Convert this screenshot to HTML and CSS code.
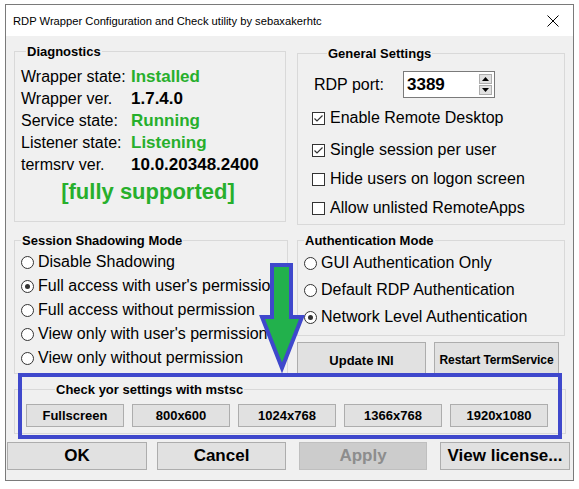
FILE: index.html
```html
<!DOCTYPE html>
<html>
<head>
<meta charset="utf-8">
<link rel="stylesheet" href="styles.css">
</head>
<body>
<div class="window">
  <div class="titlebar">
    <span class="title">RDP Wrapper Configuration and Check utility by sebaxakerhtc</span>
    <svg class="close" width="12" height="12" viewBox="0 0 12 12"><path d="M0.5 0.5 L11.5 11.5 M11.5 0.5 L0.5 11.5" stroke="#000" stroke-width="1" fill="none"/></svg>
  </div>

  <div class="row row1">
    <div class="group diag">
      <div class="legend lg-diag">Diagnostics</div>
      <div class="kvs">
        <div class="kv"><span class="k">Wrapper state:</span><span class="v green">Installed</span></div>
        <div class="kv"><span class="k">Wrapper ver.</span><span class="v">1.7.4.0</span></div>
        <div class="kv"><span class="k">Service state:</span><span class="v green">Running</span></div>
        <div class="kv"><span class="k">Listener state:</span><span class="v green">Listening</span></div>
        <div class="kv"><span class="k">termsrv ver.</span><span class="v">10.0.20348.2400</span></div>
      </div>
      <div class="supported">[fully supported]</div>
    </div>

    <div class="group general">
      <div class="legend lg-gen">General Settings</div>
      <div class="port">
        <span class="portlabel">RDP port:</span>
        <div class="portbox">
          <span class="portval">3389</span>
          <div class="spin">
            <div class="spinbtn"><svg width="7" height="4" viewBox="0 0 7 4"><path d="M0 4 L3.5 0 L7 4 Z" fill="#000"/></svg></div>
            <div class="spinbtn"><svg width="7" height="4" viewBox="0 0 7 4"><path d="M0 0 L3.5 4 L7 0 Z" fill="#000"/></svg></div>
          </div>
        </div>
      </div>
      <div class="checks">
        <div class="cb"><svg class="box" width="13" height="13" viewBox="0 0 13 13"><rect x="0.5" y="0.5" width="12" height="12" fill="#fff" stroke="#333"/><path d="M2.5 6.5 L5 9 L10.5 3.5" stroke="#333" stroke-width="1.2" fill="none"/></svg><span>Enable Remote Desktop</span></div>
        <div class="cb cb2"><svg class="box" width="13" height="13" viewBox="0 0 13 13"><rect x="0.5" y="0.5" width="12" height="12" fill="#fff" stroke="#333"/><path d="M2.5 6.5 L5 9 L10.5 3.5" stroke="#333" stroke-width="1.2" fill="none"/></svg><span>Single session per user</span></div>
        <div class="cb"><svg class="box" width="13" height="13" viewBox="0 0 13 13"><rect x="0.5" y="0.5" width="12" height="12" fill="#fff" stroke="#333"/></svg><span>Hide users on logon screen</span></div>
        <div class="cb"><svg class="box" width="13" height="13" viewBox="0 0 13 13"><rect x="0.5" y="0.5" width="12" height="12" fill="#fff" stroke="#333"/></svg><span>Allow unlisted RemoteApps</span></div>
      </div>
    </div>
  </div>

  <div class="row row2">
    <div class="group shadow">
      <div class="legend lg-sh">Session Shadowing Mode</div>
      <div class="radios sh-radios">
        <div class="rb"><span class="radio"></span><span class="rt">Disable Shadowing</span></div>
        <div class="rb"><span class="radio on"></span><span class="rt">Full access with user's permission</span></div>
        <div class="rb"><span class="radio"></span><span class="rt">Full access without permission</span></div>
        <div class="rb"><span class="radio"></span><span class="rt">View only with user's permission</span></div>
        <div class="rb"><span class="radio"></span><span class="rt">View only without permission</span></div>
      </div>
    </div>
    <div class="rightcol">
      <div class="group auth">
        <div class="legend lg-auth">Authentication Mode</div>
        <div class="radios au-radios">
          <div class="rb"><span class="radio"></span><span class="rt">GUI Authentication Only</span></div>
          <div class="rb"><span class="radio"></span><span class="rt">Default RDP Authentication</span></div>
          <div class="rb"><span class="radio on"></span><span class="rt">Network Level Authentication</span></div>
        </div>
      </div>
      <div class="actrow">
        <div class="btn act act1">Update INI</div>
        <div class="btn act act2">Restart TermService</div>
      </div>
    </div>
  </div>

  <div class="row group mstsc">
    <div class="legend lg-ms">Check yor settings with mstsc</div>
    <div class="msbtns">
      <div class="btn ms">Fullscreen</div>
      <div class="btn ms">800x600</div>
      <div class="btn ms">1024x768</div>
      <div class="btn ms">1366x768</div>
      <div class="btn ms">1920x1080</div>
    </div>
  </div>

  <div class="bottom">
    <div class="btn big b-ok">OK</div>
    <div class="btn big b-cancel">Cancel</div>
    <div class="btn big b-apply disabled">Apply</div>
    <div class="btn big b-lic">View license...</div>
  </div>

  <div class="highlight"></div>
  <svg class="arrow" width="579" height="489" viewBox="0 0 579 489">
    <polygon points="272,265 291,265 291,317 302,317 282,368 262,317 272,317" fill="#22b14c" stroke="#3f48cc" stroke-width="4" stroke-linejoin="miter" stroke-miterlimit="10"/>
  </svg>
</div>
</body>
</html>
```

FILE: styles.css
```css
html, body {
  margin: 0;
  padding: 0;
  background: #ffffff;
}

body {
  font-family: "Liberation Sans", Arial, sans-serif;
  color: #000;
}

.window {
  position: relative;
  margin: 4px 0 0 5px;
  width: 569px;
  height: 477px;
  box-sizing: border-box;
  border: 1px solid #7a7a7a;
  background: #f0f0f0;
}

.titlebar {
  height: 31px;
  background: #fff;
  display: flex;
  align-items: center;
  padding-left: 7px;
  padding-right: 14px;
}

.title {
  font-size: 11.2px;
  color: #000;
}

.close {
  margin-left: auto;
  display: block;
}

.row {
  margin-left: 8px;
}

.row1 {
  display: flex;
  align-items: flex-start;
  gap: 11px;
  margin-top: 15px;
}

.group {
  box-sizing: border-box;
  border: 1px solid #d9d9d9;
}

.legend {
  width: fit-content;
  margin-top: -8px;
  height: 15px;
  line-height: 15px;
  padding: 0 1px;
  background: #f0f0f0;
  font-weight: bold;
  font-size: 13px;
}

.lg-diag { margin-left: 11px; }
.lg-gen { margin-left: 29px; }
.lg-sh { margin-left: 6px; }
.lg-auth { margin-left: 6px; }
.lg-ms { margin-left: 40px; }

/* Diagnostics */
.diag {
  width: 272px;
  height: 171px;
}

.kvs {
  margin-top: 7px;
  padding-left: 6px;
}

.kv {
  display: flex;
  height: 22px;
  line-height: 22px;
  font-size: 16px;
}

.k {
  width: 110px;
}

.v {
  font-weight: bold;
  font-size: 17px;
}

.green {
  color: #27af2c;
}

.supported {
  height: 32px;
  line-height: 32px;
  text-align: center;
  font-weight: bold;
  font-size: 22px;
  color: #27af2c;
  padding-right: 4px;
}

/* General */
.general {
  width: 268px;
  height: 172px;
  margin-top: 2px;
}

.port {
  display: flex;
  align-items: center;
  margin-top: 10px;
  height: 27px;
  padding-left: 16px;
}

.portlabel {
  width: 89px;
  font-size: 16px;
}

.portbox {
  box-sizing: border-box;
  width: 92px;
  height: 27px;
  border: 1px solid #7a7a7a;
  background: #fff;
  display: flex;
  align-items: center;
  padding-left: 3px;
}

.portval {
  font-weight: bold;
  font-size: 17px;
}

.spin {
  margin-left: auto;
  margin-right: 2px;
  display: flex;
  flex-direction: column;
  gap: 1px;
}

.spinbtn {
  box-sizing: border-box;
  width: 13px;
  height: 10px;
  background: #e1e1e1;
  border: 1px solid #adadad;
  display: flex;
  align-items: center;
  justify-content: center;
}

.spinbtn svg {
  display: block;
}

.checks {
  display: flex;
  flex-direction: column;
  gap: 7px;
  margin-top: 9px;
  padding-left: 14px;
}

.cb {
  display: flex;
  align-items: center;
  height: 22px;
  font-size: 16px;
}

.cb2 {
  margin-top: 3px;
}

.cb .box {
  display: block;
  margin-right: 5px;
  flex: none;
}

/* Row 2 */
.row2 {
  display: flex;
  align-items: flex-start;
  gap: 9px;
  margin-top: 15px;
}

.shadow {
  width: 274px;
  height: 134px;
}

.radios {
  display: flex;
  flex-direction: column;
}

.rb {
  display: flex;
  align-items: center;
  height: 24px;
  font-size: 16px;
  white-space: nowrap;
}

.sh-radios {
  margin-top: 2px;
  padding-left: 6px;
}

.sh-radios .rb {
  width: 249px;
  overflow: hidden;
}

.au-radios {
  margin-top: 3px;
  gap: 3px;
  padding-left: 6px;
}

.radio {
  box-sizing: border-box;
  flex: none;
  width: 13px;
  height: 13px;
  border: 1px solid #333;
  border-radius: 50%;
  background: #fff;
  margin-right: 4px;
  display: flex;
  align-items: center;
  justify-content: center;
}

.radio.on::after {
  content: "";
  width: 5px;
  height: 5px;
  border-radius: 50%;
  background: #333;
}

.rightcol {
  width: 268px;
}

.auth {
  height: 96px;
}

.actrow {
  display: flex;
  gap: 8px;
  margin-top: 6px;
}

.btn {
  box-sizing: border-box;
  background: #e1e1e1;
  border: 1px solid #adadad;
  font-weight: bold;
  display: flex;
  justify-content: center;
  white-space: nowrap;
}

.act {
  height: 35px;
  font-size: 13px;
  padding-top: 10px;
  line-height: 15px;
}

.act1 { width: 129px; }
.act2 { width: 125px; font-size: 12px; letter-spacing: -0.1px; }

/* mstsc */
.mstsc {
  width: 552px;
  height: 45px;
  margin-top: 12px;
}

.msbtns {
  display: flex;
  gap: 8px;
  margin-top: 7px;
  padding-left: 11px;
}

.ms {
  width: 98px;
  height: 23px;
  line-height: 21px;
  font-size: 13px;
  align-items: center;
}

/* Bottom */
.bottom {
  display: flex;
  margin-top: 8px;
  margin-left: 1px;
}

.big {
  height: 28px;
  line-height: 26px;
  font-size: 17px;
}

.b-ok { width: 140px; }
.b-cancel { width: 129px; margin-left: 10px; }
.b-apply { width: 128px; margin-left: 13px; }
.b-lic { width: 130px; margin-left: 13px; }

.disabled {
  background: #cccccc;
  border-color: #bfbfbf;
  color: #8d8d8d;
}

/* Annotations drawn over the dialog */
.highlight {
  position: absolute;
  left: 12px;
  top: 368px;
  width: 544px;
  height: 66px;
  box-sizing: border-box;
  border: 4px solid #3f48cc;
  pointer-events: none;
}

.arrow {
  position: absolute;
  left: -6px;
  top: -5px;
  pointer-events: none;
}
```
